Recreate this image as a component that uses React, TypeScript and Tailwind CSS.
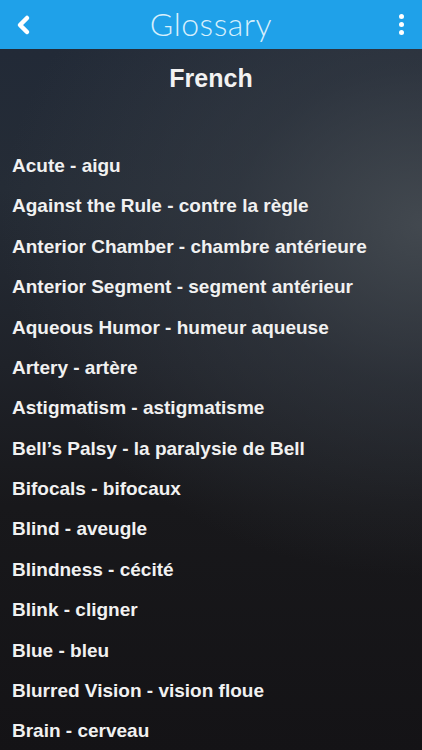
import React from "react";

const items = [
  "Acute - aigu",
  "Against the Rule - contre la règle",
  "Anterior Chamber - chambre antérieure",
  "Anterior Segment - segment antérieur",
  "Aqueous Humor - humeur aqueuse",
  "Artery - artère",
  "Astigmatism - astigmatisme",
  "Bell’s Palsy - la paralysie de Bell",
  "Bifocals - bifocaux",
  "Blind - aveugle",
  "Blindness - cécité",
  "Blink - cligner",
  "Blue - bleu",
  "Blurred Vision - vision floue",
  "Brain - cerveau",
];

export default function App() {
  return (
    <div className="w-[422px] h-[750px] overflow-hidden flex flex-col bg-[#151417]">
      <header className="h-[49px] shrink-0 bg-[#1fa1e9] grid grid-cols-[60px_1fr_60px] items-center">
        <svg width="22" height="22" viewBox="0 0 22 22" className="ml-[12px]">
          <path d="M15 4 L8 11 L15 18" stroke="#fff" strokeWidth="4.5" fill="none" strokeLinecap="round" strokeLinejoin="round" />
        </svg>
        <span className="text-center text-[32px] leading-none text-[#d6effc] tracking-[0.5px] -mt-[2px]" style={{ fontFamily: "Lato, 'Noto Sans', sans-serif", fontWeight: 300 }}>
          Glossary
        </span>
        <div className="flex flex-col gap-[3px] justify-self-end mr-[18px] items-center">
          <span className="w-[5px] h-[5px] rounded-full bg-white" />
          <span className="w-[5px] h-[5px] rounded-full bg-white" />
          <span className="w-[5px] h-[5px] rounded-full bg-white" />
        </div>
      </header>
      <main
        className="flex-1 flex flex-col"
        style={{
          background:
            "radial-gradient(ellipse 100% 50% at 100% 25%, rgba(74,80,86,0.8) 0%, rgba(60,66,74,0.45) 45%, rgba(40,44,50,0) 100%), linear-gradient(180deg, #222a37 0%, #252c36 20%, #1f2229 45%, #18181b 65%, #141316 100%)",
        }}
      >
        <h1 className="text-center text-[25px] font-bold text-[#f2f2f2] mt-[15px] leading-[28px]" style={{ fontFamily: "'Liberation Sans', Arial, sans-serif" }}>
          French
        </h1>
        <ul className="mt-[54px] flex flex-col" style={{ fontFamily: "'Liberation Sans', Arial, sans-serif" }}>
          {items.map((t) => (
            <li key={t} className="pl-[12px] h-[40.4px] flex items-center text-[19px] font-bold text-[#f1f1f1]">
              {t}
            </li>
          ))}
        </ul>
      </main>
    </div>
  );
}
